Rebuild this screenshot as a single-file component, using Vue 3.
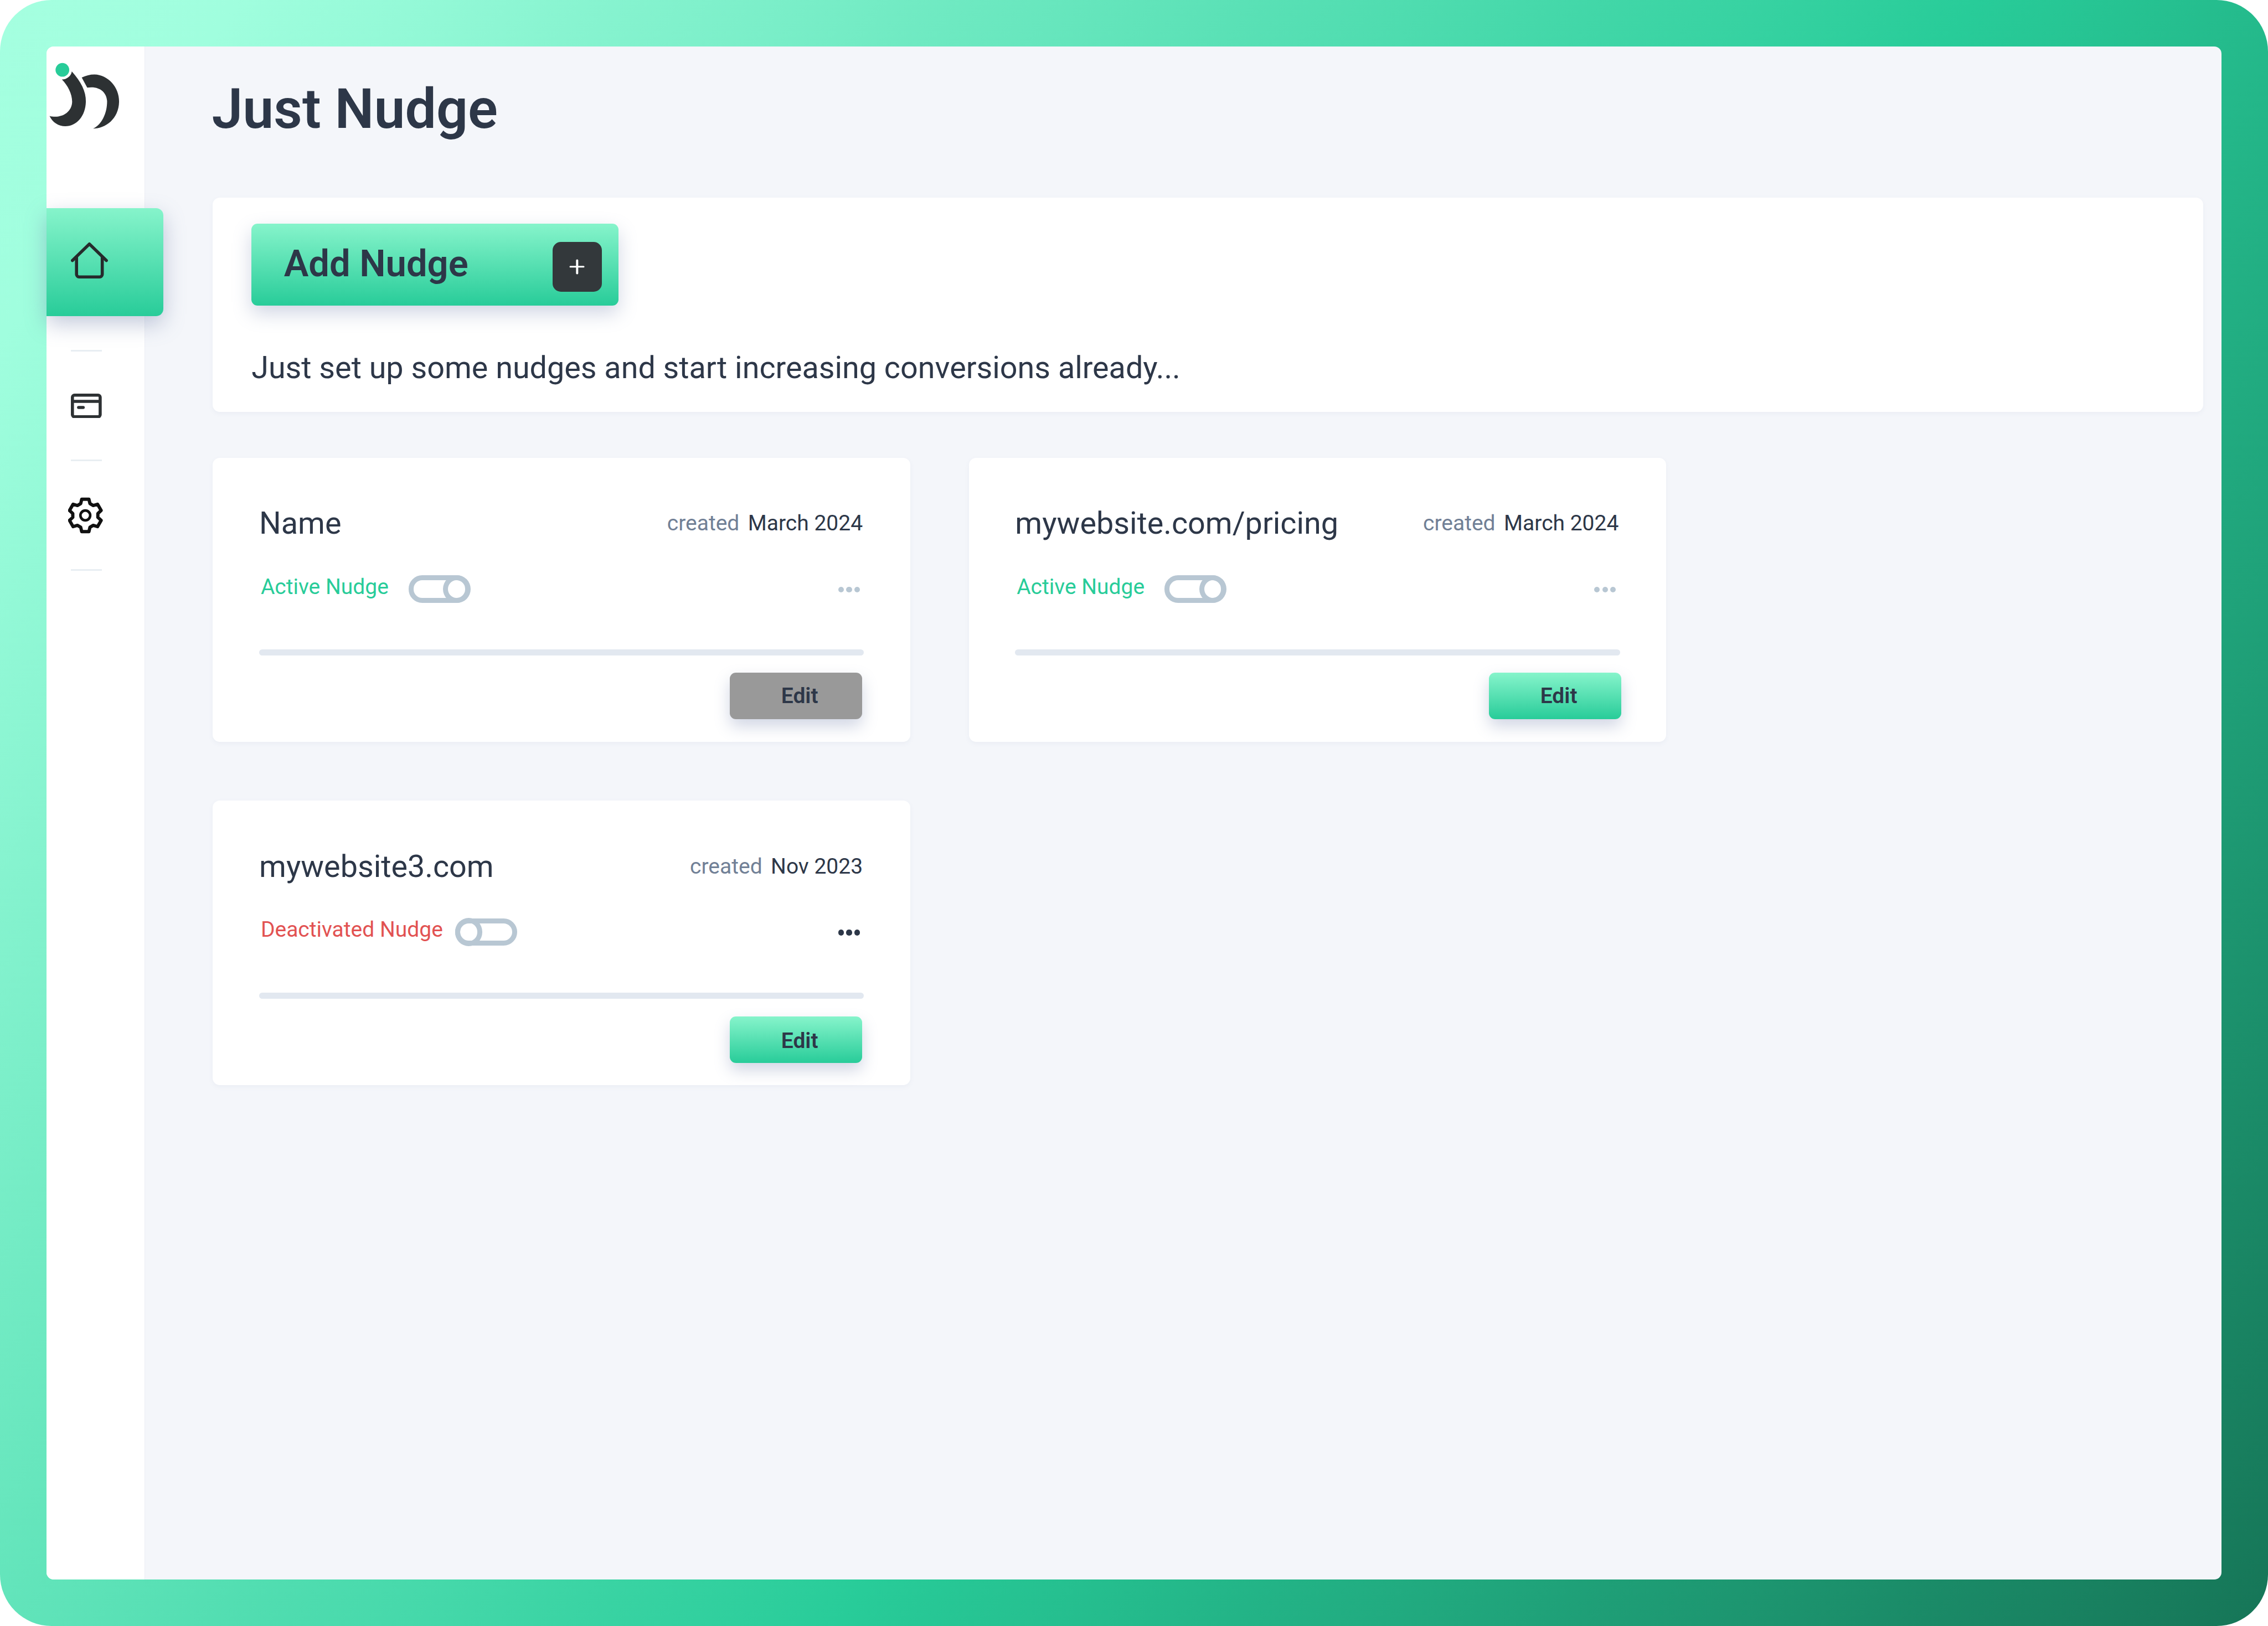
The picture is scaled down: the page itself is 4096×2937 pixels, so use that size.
<script setup>
import { ref } from 'vue'

const cards = ref([
  { name: 'Name', date: 'March 2024', active: true, muted: true, greyEdit: true },
  { name: 'mywebsite.com/pricing', date: 'March 2024', active: true, muted: true, nudged: true },
  { name: 'mywebsite3.com', date: 'Nov 2023', active: false, muted: false, low: true },
])

// six teeth, ref pixels, centred on 33.5 / 35.5
const gearPath = (() => {
  const cx = 33.5, cy = 35.5, outer = 31.5, root = 23, half = 7
  let d = ''
  for (let i = 0; i < 6; i++) {
    const a = (i * Math.PI) / 3
    const pt = (along, side) => [
      (cx + along * Math.sin(a) + side * Math.cos(a)).toFixed(1),
      (cy - along * Math.cos(a) + side * Math.sin(a)).toFixed(1),
    ].join(' ')
    d += `${i ? 'L' : 'M'}${pt(root, -half - 2)} L${pt(outer, -half)} L${pt(outer, half)} L${pt(root, half + 2)} `
  }
  return d + 'Z'
})()
</script>

<template>
  <div class="frame">
    <div class="window">
      <aside class="sidebar">
        <svg class="logo" viewBox="100 90 430 400">
          <circle cx="183" cy="139" r="40" fill="#28cc99" />
          <path fill="#2d3133" d="M238 148C290 205 322 265 320 325C318 410 265 468 200 468C160 468 125 445 108 408C165 425 238 395 240 325C240 280 215 230 180 195C205 197 235 175 238 148Z" />
          <path fill="#2d3133" d="M296 184C320 172 345 166 370 166C450 168 515 240 514 325C512 425 435 482 362 482C410 460 445 395 444 320C440 270 400 232 328 243Z" />
        </svg>
        <div class="nav-active">
          <svg class="home-icon" viewBox="0 0 72 72" fill="none" stroke="#262b2c" stroke-width="6" stroke-linecap="round" stroke-linejoin="round">
            <path d="M3 36L36 4L69 36" />
            <path d="M11 30V63a5 5 0 0 0 5 5H56a5 5 0 0 0 5-5V30" />
          </svg>
        </div>
        <div class="nav-line first"></div>
        <svg class="card-icon" viewBox="0 0 60 48" fill="none" stroke="#2d3133" stroke-width="6">
          <rect x="3" y="3" width="54" height="42" rx="4" />
          <path d="M3 15H57" />
          <rect x="12" y="24" width="15" height="6" rx="3" fill="#2d3133" stroke="none" />
        </svg>
        <div class="nav-line second"></div>
        <svg class="gear-icon" viewBox="0 0 67 71" fill="none" stroke="#111" stroke-width="6.4" stroke-linejoin="round">
          <path :d="gearPath" />
          <circle cx="33.5" cy="35.5" r="9.5" stroke-width="5" />
        </svg>
        <div class="nav-line third"></div>
      </aside>

      <main class="content">
        <h1 class="title">Just Nudge</h1>

        <section class="intro">
          <button class="add-btn">
            <span class="add-label">Add Nudge</span>
            <span class="plus"></span>
          </button>
          <p class="intro-text">Just set up some nudges and start increasing conversions already...</p>
        </section>

        <section class="grid">
          <article v-for="card in cards" :key="card.name" class="card">
            <div class="card-head">
              <span class="card-name">{{ card.name }}</span>
              <span class="card-date"><span class="created">created</span>{{ card.date }}</span>
            </div>
            <div class="card-status">
              <span class="status-label" :class="card.active ? 'on' : 'off'">{{ card.active ? 'Active Nudge' : 'Deactivated Nudge' }}</span>
              <span class="toggle" :class="{ right: card.active }"><i></i></span>
              <span class="dots" :class="{ muted: card.muted }"><i></i><i></i><i></i></span>
            </div>
            <div class="track"></div>
            <div class="card-foot" :class="{ low: card.low }">
              <button class="edit-btn" :class="{ grey: card.greyEdit, nudged: card.nudged }">Edit</button>
            </div>
          </article>
        </section>
      </main>
    </div>
  </div>
</template>

<style>
html, body {
  background: #fff;
}
</style>

<style scoped>
.frame {
  width: 4096px;
  height: 2937px;
  box-sizing: border-box;
  padding: 83.6px;
  border-radius: 93px;
  background: linear-gradient(125deg, #a5ffe0 0%, #a0fede 7%, #28cc99 58%, #167557 100%);
  font-family: Roboto, "Liberation Sans", sans-serif;
  color: #2d3748;
}

.window {
  display: flex;
  height: 100%;
  border-radius: 13px;
  background: #f4f6fa;
}

.sidebar {
  flex: none;
  width: 178.3px;
  box-sizing: border-box;
  padding-top: 27.9px;
  background: #fff;
  border-right: 1.5px solid #eceff4;
  border-radius: 13px 0 0 13px;
  position: relative;
  z-index: 1;
}

.logo {
  display: block;
  width: 133px;
  height: 123.8px;
  margin: 0 0 141.2px 3.1px;
}

.nav-active {
  display: flex;
  align-items: center;
  width: 211.8px;
  height: 195px;
  padding-left: 44.6px;
  box-sizing: border-box;
  border-radius: 0 13px 13px 0;
  background: linear-gradient(180deg, #86f4cb 0%, #28cc99 100%);
  box-shadow: 0 14px 38px rgba(113, 128, 170, 0.42);
}

.home-icon {
  width: 66.9px;
  height: 66.9px;
  margin-bottom: 6.5px;
}

.nav-line {
  width: 55.7px;
  height: 2.8px;
  margin-left: 44.6px;
  background: #e8eef2;
}

.nav-line.first {
  margin-top: 60.8px;
}

.nav-line.second {
  margin-top: 74.8px;
}

.nav-line.third {
  margin-top: 64.6px;
}

.card-icon {
  display: block;
  width: 55.7px;
  height: 44.6px;
  margin: 75.7px 0 0 44.6px;
}

.gear-icon {
  display: block;
  width: 62.2px;
  height: 66px;
  margin: 64.6px 0 0 39.9px;
}

.content {
  flex: 1;
  min-width: 0;
  box-sizing: border-box;
  padding: 53.9px 33.4px 0 122.6px;
}

.title {
  margin: 0 0 98.5px -2px;
  font-size: 100.3px;
  line-height: 120.7px;
  font-weight: 600;
  color: #2d3748;
}

.intro {
  box-sizing: border-box;
  height: 387.3px;
  padding: 47.4px 69.7px 0;
  background: #fff;
  border-radius: 13px;
  box-shadow: 0 3px 8px rgba(113, 128, 170, 0.07);
}

.add-btn {
  display: flex;
  align-items: center;
  justify-content: space-between;
  box-sizing: border-box;
  width: 662.7px;
  height: 147.7px;
  padding: 0 30px 0 58.5px;
  border: none;
  border-radius: 11px;
  background: linear-gradient(180deg, #86f4cb 0%, #28cc99 100%);
  box-shadow: 0 14px 34px rgba(113, 128, 170, 0.32);
  font-family: inherit;
  font-size: 66.9px;
  font-weight: 600;
  color: #2d3748;
}

.add-label {
  margin-bottom: 4px;
}

.plus {
  position: relative;
  flex: none;
  width: 89.2px;
  height: 89.2px;
  margin-top: 8px;
  border-radius: 15px;
  background: #33383b;
}

.plus::before,
.plus::after {
  content: "";
  position: absolute;
  left: 50%;
  top: 50%;
  background: #fff;
  border-radius: 2px;
}

.plus::before {
  width: 27px;
  height: 3.4px;
  transform: translate(-50%, -50%);
}

.plus::after {
  width: 3.4px;
  height: 27px;
  transform: translate(-50%, -50%);
}

.intro-text {
  margin: 72.9px 0 0;
  font-size: 55.7px;
  line-height: 78px;
}

.grid {
  display: grid;
  grid-template-columns: repeat(2, 1259.4px);
  gap: 105.9px;
  margin-top: 82.7px;
}

.card {
  box-sizing: border-box;
  height: 513.6px;
  padding: 79.5px 83.6px 0;
  background: #fff;
  border-radius: 13px;
  box-shadow: 0 3px 8px rgba(113, 128, 170, 0.07);
}

.card-head {
  display: flex;
  align-items: center;
  justify-content: space-between;
  height: 78px;
}

.card-name {
  font-size: 55.7px;
  line-height: 78px;
}

.card-date {
  margin-right: 2.2px;
  font-size: 39px;
}

.created {
  margin-right: 15.4px;
  color: #718096;
}

.card-status {
  display: flex;
  align-items: center;
  height: 49.2px;
  margin-top: 55.2px;
  padding-left: 2.8px;
}

.status-label {
  margin-bottom: 8px;
  font-size: 39px;
}

.status-label.on {
  color: #28cc99;
}

.status-label.off {
  color: #e25252;
}

.toggle {
  position: relative;
  flex: none;
  box-sizing: border-box;
  width: 111.5px;
  height: 49.2px;
  margin-left: 35.7px;
  border: 9.6px solid #b8c7d3;
  border-radius: 24.6px;
  background: #fff;
}

.status-label.off + .toggle {
  margin-left: 22.5px;
}

.toggle i {
  position: absolute;
  top: -9.6px;
  bottom: -9.6px;
  left: -9.6px;
  width: 49.2px;
  box-sizing: border-box;
  border: 9.6px solid #b8c7d3;
  border-radius: 50%;
}

.toggle.right i {
  left: auto;
  right: -9.6px;
}

.dots {
  display: flex;
  gap: 4.2px;
  margin: 2px 7.4px 0 auto;
}

.dots i {
  width: 10.2px;
  height: 10.2px;
  border-radius: 50%;
  background: #2d3748;
}

.dots.muted i {
  background: #b8c7d3;
}

.track {
  height: 11.1px;
  margin-top: 84.6px;
  border-radius: 5.6px;
  background: #e2e8f0;
}

.card-foot {
  display: flex;
  justify-content: flex-end;
  margin-top: 30.7px;
}

.card-foot.low {
  margin-top: 32.7px;
}

.card-foot.low .edit-btn {
  padding-top: 3px;
}

.edit-btn {
  box-sizing: border-box;
  width: 239.6px;
  height: 83.6px;
  margin-right: 2.8px;
  padding: 0 0 0 92.9px;
  border: none;
  border-radius: 11px;
  background: linear-gradient(180deg, #86f4cb 0%, #28cc99 100%);
  box-shadow: 0 13px 28px rgba(113, 128, 170, 0.32);
  font-family: inherit;
  font-size: 39px;
  font-weight: 600;
  text-align: left;
  color: #2d3748;
}

.edit-btn.grey {
  background: #999;
}

.edit-btn.nudged {
  margin-right: -2.8px;
}
</style>
